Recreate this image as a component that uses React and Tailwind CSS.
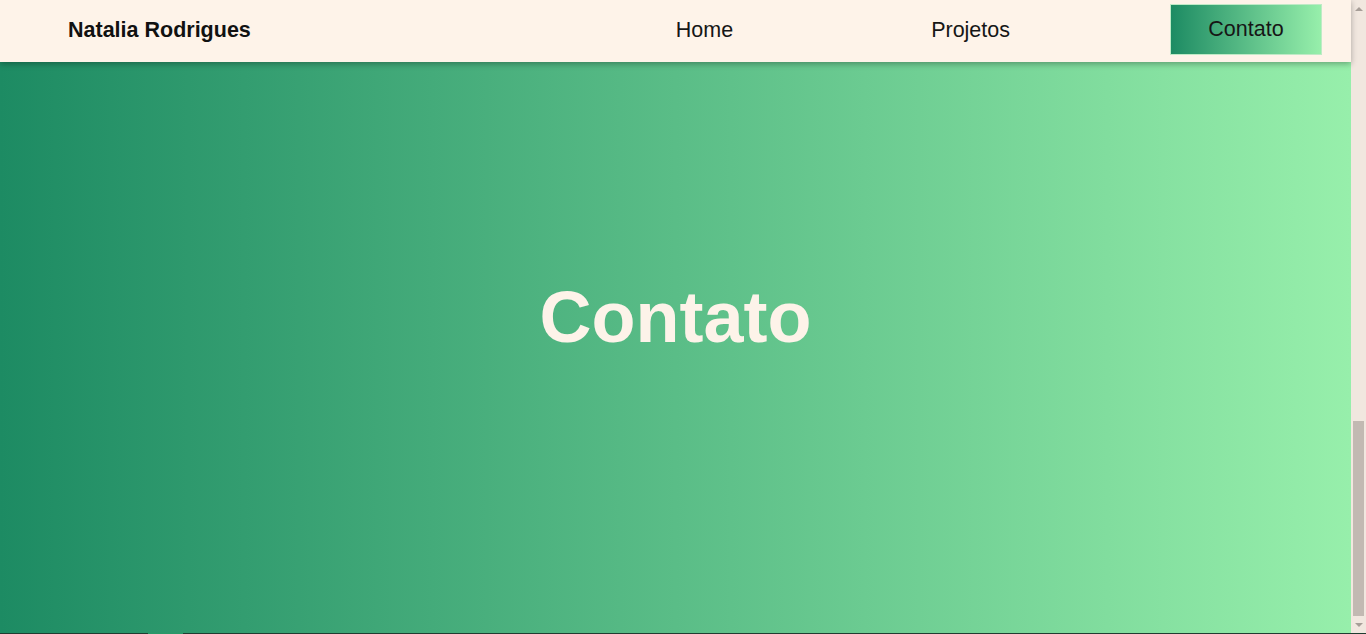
import React from 'react';

const links = ['Home', 'Projetos'];

const Scrollbar = () => (
    <div className="w-[15px] bg-[#f1e7df] flex flex-col items-center">
        <div className="h-[17px] flex items-center justify-center">
            <div className="w-0 h-0 border-x-[4px] border-x-transparent border-b-[4px] border-b-[#a79e98]" />
        </div>
        <div className="flex-1" />
        <div className="w-[11px] h-[195px] bg-[#c2b9b2]" />
        <div className="h-[17px] flex items-center justify-center">
            <div className="w-0 h-0 border-x-[4px] border-x-transparent border-t-[4px] border-t-[#a79e98]" />
        </div>
    </div>
);

const App = () => {
    return (
        <div className="h-[634px] overflow-hidden flex flex-col font-['Liberation_Sans',Arial,sans-serif]">
            <div className="flex-1 flex min-h-0">
                <div className="flex-1 flex flex-col bg-[linear-gradient(to_right,#1d8b63,#97efab)]">
                    <nav className="relative z-10 h-[62px] shrink-0 bg-[#fef3e9] shadow-[0_2px_6px_rgba(0,0,0,0.3)] flex items-center justify-between pl-[68px] pr-[29px]">
                        <h1 className="text-[21.5px] font-bold text-[#111] -mt-0.5">Natalia Rodrigues</h1>
                        <ul className="flex items-center gap-[122px] text-[21.5px] text-[#161616]">
                            {links.map(l => (
                                <li key={l} className="px-[38px] -mt-0.5">{l}</li>
                            ))}
                            <li className="w-[152px] h-[51px] -mt-[3px] flex items-center justify-center border border-[#bfeac6] bg-[linear-gradient(to_right,#1d8b63,#97efab)]">
                                Contato
                            </li>
                        </ul>
                    </nav>
                    <section className="flex-1 flex items-center justify-center pb-[62px]">
                        <h2 className="text-[72px] leading-none font-bold text-[#fdf3e9]">Contato</h2>
                    </section>
                </div>
                <Scrollbar />
            </div>
            <div className="h-px shrink-0 flex bg-[#1f3d31]">
                <div className="w-[148px]" />
                <div className="w-[35px] bg-[#2a9868]" />
            </div>
        </div>
    );
};

export default App;
